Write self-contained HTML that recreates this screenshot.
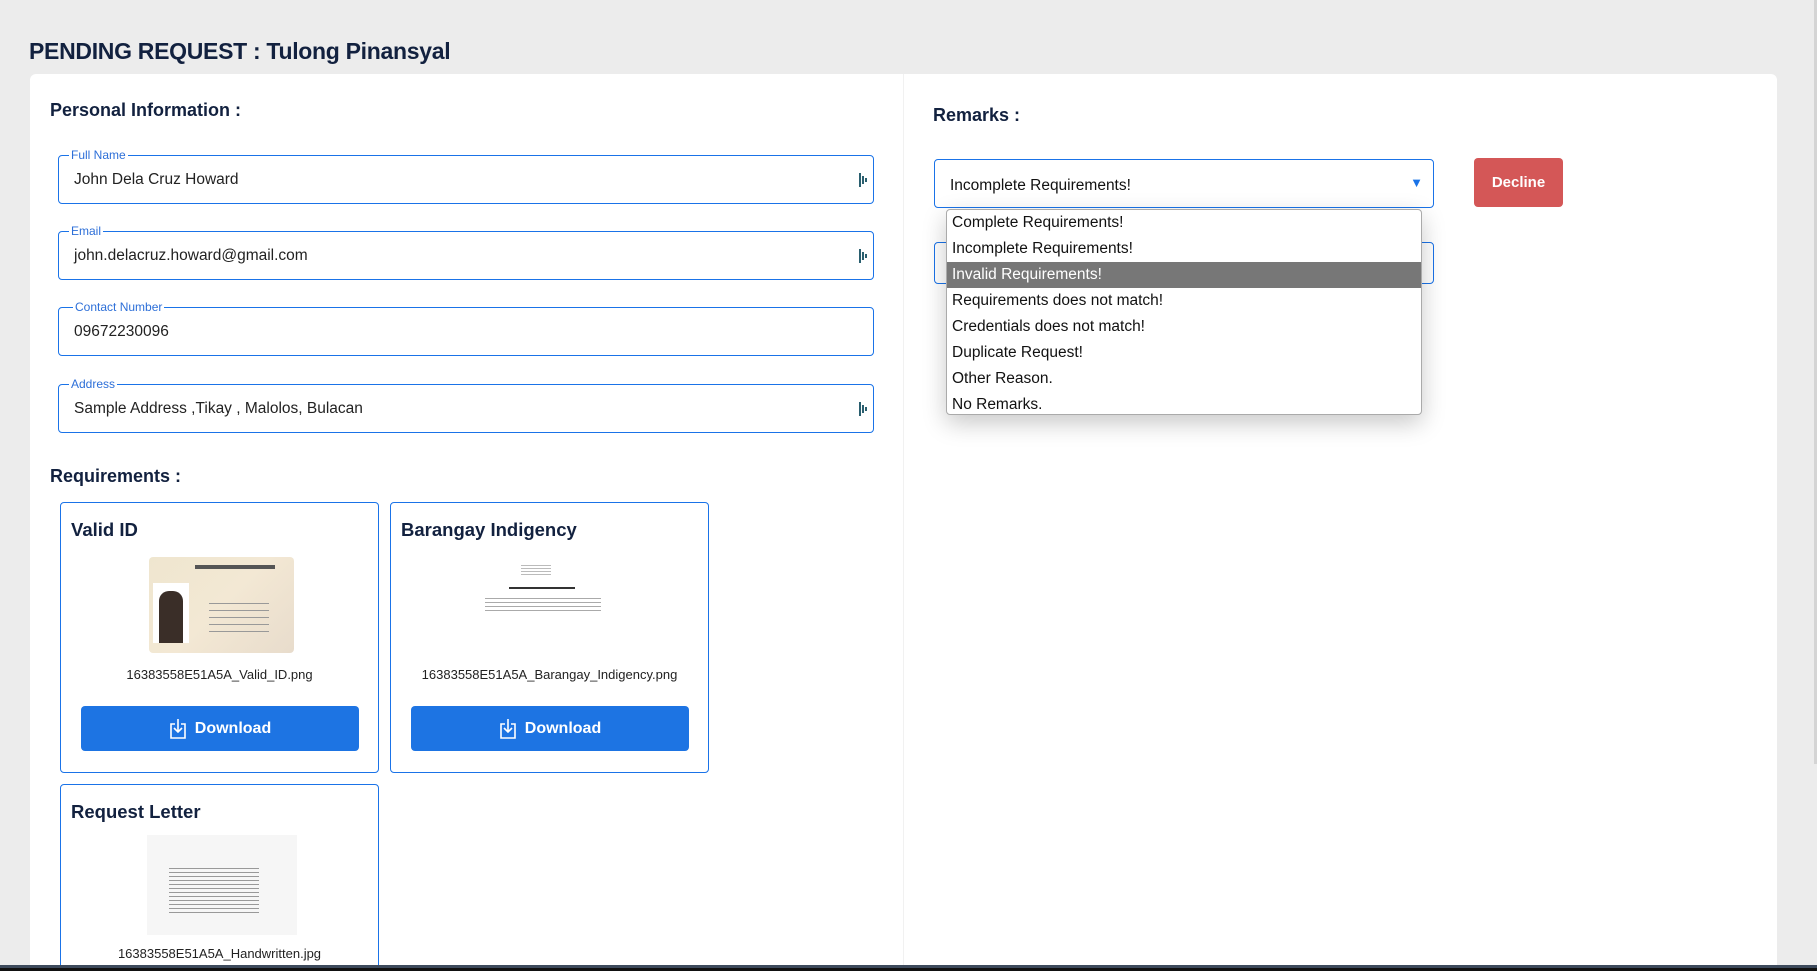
<!DOCTYPE html>
<html style="width:1817px;height:971px;overflow:hidden"><head><meta charset="utf-8"><style>
*{box-sizing:border-box;margin:0;padding:0}
body{width:1817px;height:971px;overflow:hidden;background:#ececec;font-family:"Liberation Sans",sans-serif;color:#111;position:relative}
.a{position:absolute}
h1{position:absolute;left:29px;top:38px;font-size:23px;font-weight:bold;color:#12213f;letter-spacing:-0.3px}
.card{left:30px;top:74px;width:1747px;height:891px;background:#fff;border-radius:6px 6px 0 0}
.div{left:903px;top:74px;width:1px;height:891px;background:#f1f1f1}
.h2{font-size:18px;font-weight:bold;color:#12213f}
.fld{position:absolute;left:58px;width:816px;height:49px;border:1px solid #1a73e8;border-radius:4px}
.fld .lb{position:absolute;top:-8px;left:10px;background:#fff;padding:0 2px;font-size:12px;color:#2d6fd8;line-height:14px}
.fld .v{position:absolute;left:15px;top:15px;font-size:15.5px;color:#222}
.fld .ic{position:absolute;right:6px;top:17px;width:8px;height:14px}
.rc{position:absolute;width:319px;border:1px solid #1a73e8;border-radius:4px;background:#fff}
.rc .t{position:absolute;left:10px;top:16px;font-size:18.5px;font-weight:bold;color:#12213f}
.rc .fn{position:absolute;left:0;width:100%;text-align:center;font-size:13px;color:#222}
.btn{position:absolute;left:20px;width:278px;height:45px;background:#1d74e3;border-radius:4px;color:#fff;font-weight:bold;font-size:16px;display:flex;align-items:center;justify-content:center;gap:8px}
.dd{left:946px;top:209px;width:476px;height:206px;background:#fff;border:1px solid #aaa;border-radius:4px;box-shadow:0 8px 24px rgba(0,0,0,.22);overflow:hidden}
.dd div{height:26px;line-height:26px;padding-left:5px;font-size:15.5px;color:#111}
.dd .h{background:#777;color:#fff}
</style></head><body>
<h1>PENDING REQUEST : Tulong Pinansyal</h1>
<div class="a card"></div>
<div class="a div"></div>
<div class="a h2" style="left:50px;top:100px">Personal Information :</div>

<div class="fld" style="top:155px"><span class="lb">Full Name</span><span class="v">John Dela Cruz Howard</span><svg class="ic" viewBox="0 0 8 14"><rect x="0" y="0" width="2" height="14" fill="#2a5f6f"/><rect x="3" y="3" width="2" height="8" fill="#2a5f6f"/><rect x="6" y="5" width="2" height="4" fill="#2a5f6f"/></svg></div>
<div class="fld" style="top:231px"><span class="lb">Email</span><span class="v">john.delacruz.howard@gmail.com</span><svg class="ic" viewBox="0 0 8 14"><rect x="0" y="0" width="2" height="14" fill="#2a5f6f"/><rect x="3" y="3" width="2" height="8" fill="#2a5f6f"/><rect x="6" y="5" width="2" height="4" fill="#2a5f6f"/></svg></div>
<div class="fld" style="top:307px"><span class="lb" style="left:14px">Contact Number</span><span class="v">09672230096</span></div>
<div class="fld" style="top:384px"><span class="lb">Address</span><span class="v">Sample Address ,Tikay , Malolos, Bulacan</span><svg class="ic" viewBox="0 0 8 14"><rect x="0" y="0" width="2" height="14" fill="#2a5f6f"/><rect x="3" y="3" width="2" height="8" fill="#2a5f6f"/><rect x="6" y="5" width="2" height="4" fill="#2a5f6f"/></svg></div>

<div class="a h2" style="left:50px;top:466px">Requirements :</div>

<div class="rc" style="left:60px;top:502px;height:271px"><div class="t">Valid ID</div>
<div class="a" style="left:88px;top:54px;width:145px;height:96px;background:linear-gradient(135deg,#efe6cf,#f3e8d4 50%,#e8dccc);border-radius:4px"><div class="a" style="left:4px;top:26px;width:36px;height:60px;background:#fff"></div><div class="a" style="left:10px;top:34px;width:24px;height:52px;background:#3a2e28;border-radius:10px 10px 0 0"></div><div class="a" style="left:46px;top:8px;width:80px;height:4px;background:#555"></div><div class="a" style="left:60px;top:40px;width:60px;height:40px;background:repeating-linear-gradient(#fff0,#fff0 6px,#999 6px,#999 7px)"></div></div>
<div class="fn" style="top:164px">16383558E51A5A_Valid_ID.png</div>
<div class="btn" style="top:203px"><svg width="18" height="22" viewBox="0 0 18 22" fill="none" stroke="#fff" stroke-width="1.6"><path d="M6 6H2v14h14V6h-4M9 1v13M5 10l4 4 4-4"/></svg>Download</div></div>

<div class="rc" style="left:390px;top:502px;height:271px"><div class="t">Barangay Indigency</div>
<div class="a" style="left:90px;top:58px;width:120px;height:76px;background:#fff"><div class="a" style="left:40px;top:2px;width:30px;height:12px;background:repeating-linear-gradient(#fff,#fff 2px,#bbb 2px,#bbb 3px)"></div><div class="a" style="left:28px;top:26px;width:66px;height:2px;background:#333"></div><div class="a" style="left:4px;top:34px;width:116px;height:18px;background:repeating-linear-gradient(#fff,#fff 3px,#aaa 3px,#aaa 4px)"></div></div>
<div class="fn" style="top:164px">16383558E51A5A_Barangay_Indigency.png</div>
<div class="btn" style="top:203px"><svg width="18" height="22" viewBox="0 0 18 22" fill="none" stroke="#fff" stroke-width="1.6"><path d="M6 6H2v14h14V6h-4M9 1v13M5 10l4 4 4-4"/></svg>Download</div></div>

<div class="rc" style="left:60px;top:784px;height:185px"><div class="t">Request Letter</div>
<div class="a" style="left:86px;top:50px;width:150px;height:100px;background:#f6f6f6"><div class="a" style="left:22px;top:30px;width:90px;height:50px;background:repeating-linear-gradient(#f6f6f6,#f6f6f6 3px,#999 3px,#999 4px)"></div></div>
<div class="fn" style="top:161px">16383558E51A5A_Handwritten.jpg</div></div>

<div class="a h2" style="left:933px;top:105px">Remarks :</div>
<div class="a" style="left:934px;top:242px;width:500px;height:42px;border:1px solid #1a73e8;border-radius:4px"></div>
<div class="a" style="left:934px;top:159px;width:500px;height:49px;border:1px solid #1a73e8;border-radius:4px;background:#fff"><span class="a" style="left:15px;top:17px;font-size:15.5px">Incomplete Requirements!</span><span class="a" style="right:10px;top:15px;color:#1a73e8;font-size:13px">▼</span></div>
<div class="a" style="left:1474px;top:158px;width:89px;height:49px;background:#d45757;border-radius:4px;color:#fff;font-weight:bold;font-size:15px;line-height:49px;text-align:center">Decline</div>
<div class="a dd"><div>Complete Requirements!</div><div>Incomplete Requirements!</div><div class="h">Invalid Requirements!</div><div>Requirements does not match!</div><div>Credentials does not match!</div><div>Duplicate Request!</div><div>Other Reason.</div><div>No Remarks.</div></div>

<div class="a" style="left:1814px;top:0;width:3px;height:764px;background:#d4d4d4"></div>
<div class="a" style="left:0;top:965px;width:1817px;height:3px;background:#3d4a5c"></div>
<div class="a" style="left:0;top:968px;width:1817px;height:3px;background:#111"></div>
</body></html>
